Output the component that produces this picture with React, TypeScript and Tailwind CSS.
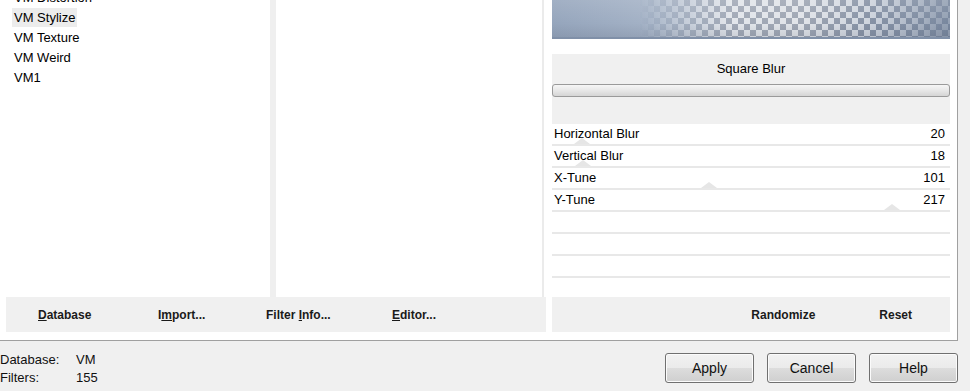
const listItems = [
  { name: "VM Distortion", selected: false },
  { name: "VM Stylize", selected: true },
  { name: "VM Texture", selected: false },
  { name: "VM Weird", selected: false },
  { name: "VM1", selected: false },
];

const params = [
  { label: "Horizontal Blur", value: "20", thumb: "left-[22px]" },
  { label: "Vertical Blur", value: "18", thumb: "left-[23px]" },
  { label: "X-Tune", value: "101", thumb: "left-[149px]" },
  { label: "Y-Tune", value: "217", thumb: "left-[332px]" },
  { label: "", value: "", thumb: "" },
  { label: "", value: "", thumb: "" },
  { label: "", value: "", thumb: "" },
  { label: "", value: "", thumb: "" },
];

function DialogButton({ label }: { label: string }) {
  return (
    <button className="w-[89px] h-[30px] rounded-[3px] border border-[#707070] bg-[linear-gradient(#f2f2f2_0%,#ebebeb_50%,#dddddd_50%,#cfcfcf_100%)] shadow-[inset_0_0_0_1px_#fbfbfb] text-[14px] text-[#111]">
      {label}
    </button>
  );
}

export default function App() {
  return (
    <div className="w-[970px] h-[391px] overflow-hidden bg-[#f0f0f0] font-['Liberation_Sans',_Arial,_sans-serif] text-black">
      {/* upper group */}
      <div className="flex h-[341px]">
        <div className="flex w-[958px] h-[341px] bg-white border-r border-b border-[#a0a0a0]">
          {/* left: lists + button bar */}
          <div className="flex flex-col w-[546px]">
            <div className="flex h-[297px]">
              <div className="w-[270px] overflow-hidden">
                <div className="flex flex-col -mt-[13px]">
                  {listItems.map((it) => (
                    <div key={it.name} className="h-[20px] flex items-center pl-[12px] text-[13px]">
                      <span className={"px-[2px] leading-[19px] " + (it.selected ? "bg-[#ececec]" : "")}>
                        {it.name}
                      </span>
                    </div>
                  ))}
                </div>
              </div>
              <div className="w-[6px] bg-[#efefef]" />
              <div className="w-[268px] border-r-2 border-[#ebebeb]" />
            </div>
            <div className="pl-[6px]">
              <div className="flex items-center h-[35px] bg-[#f0f0f0] pl-[32px] text-[12px] font-bold text-[#1a1a1a]">
                <span className="w-[120px]">
                  <u>D</u>atabase
                </span>
                <span className="w-[108px]">
                  I<u>m</u>port...
                </span>
                <span className="w-[126px]">
                  Filter <u>I</u>nfo...
                </span>
                <span>
                  <u>E</u>ditor...
                </span>
              </div>
            </div>
          </div>

          <div className="w-[6px]" />

          {/* right: preview + params */}
          <div className="flex flex-col w-[398px]">
            <div className="relative h-[39px] overflow-hidden bg-[linear-gradient(to_right,#95a5bc_0%,#a4b2c6_25%,#c4cbd6_45%,#c2c8d2_62%,#98a5b9_82%,#7d8ca3_100%)]">
              <div className="absolute inset-0 bg-[image:repeating-conic-gradient(rgba(255,255,255,0.5)_0_25%,rgba(80,90,110,0.3)_0_50%)] bg-[length:12px_12px] [mask-image:linear-gradient(to_right,transparent_22%,black_45%,black_80%,rgba(0,0,0,0.35)_97%)]" />
              <div className="absolute inset-0 bg-[linear-gradient(rgba(255,255,255,0.12),rgba(255,255,255,0)_60%,rgba(60,70,90,0.15))]" />
              <div className="absolute left-0 right-0 bottom-0 h-[2px] bg-[#8090a8]" />
            </div>
            <div className="h-[15px]" />
            <div className="h-[70px] bg-[#f0f0f0] flex flex-col">
              <div className="pt-[7px] text-center text-[13px] leading-[16px]">Square Blur</div>
              <div className="mt-[7px] h-[13px] rounded-[3px] border border-[#9a9a9a] bg-[linear-gradient(#f6f6f6,#e7e7e7_50%,#d5d5d5)]" />
            </div>
            <div className="h-[173px] overflow-hidden flex flex-col">
              {params.map((p, i) => (
                <div key={i} className="flex flex-col">
                  <div className="relative h-[20px] flex items-center justify-between pl-[2px] pr-[5px] text-[13px]">
                    {p.thumb && (
                      <div
                        className={
                          "absolute bottom-0 w-0 h-0 border-l-[8px] border-r-[8px] border-b-[6px] border-l-transparent border-r-transparent border-b-[#e6e6e6] " +
                          p.thumb
                        }
                      />
                    )}
                    <span className="relative">{p.label}</span>
                    <span className="relative">{p.value}</span>
                  </div>
                  <div className="h-[2px] bg-[#e8e8e8]" />
                </div>
              ))}
            </div>
            <div className="flex items-center justify-end gap-[64px] pr-[38px] h-[35px] bg-[#f0f0f0] text-[12px] font-bold text-[#1a1a1a]">
              <span>Randomize</span>
              <span>Reset</span>
            </div>
          </div>
        </div>
      </div>

      {/* footer */}
      <div className="flex justify-between h-[50px]">
        <div className="pt-[10px] text-[13px] leading-[18px] text-[#111]">
          <div className="flex">
            <span className="w-[76px]">Database:</span>
            <span>VM</span>
          </div>
          <div className="flex">
            <span className="w-[76px]">Filters:</span>
            <span>155</span>
          </div>
        </div>
        <div className="flex items-start gap-[13px] pt-[12px] pr-[12px]">
          <DialogButton label="Apply" />
          <DialogButton label="Cancel" />
          <DialogButton label="Help" />
        </div>
      </div>
    </div>
  );
}
